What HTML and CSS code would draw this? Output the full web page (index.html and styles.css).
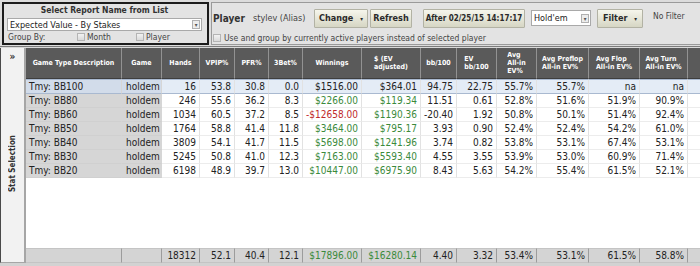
FILE: index.html
```html
<!DOCTYPE html>
<html lang="en">
  <head>
    <meta charset="UTF-8" />
    <title>Expected Value - By Stakes</title>
    <link rel="stylesheet" href="styles.css">
  </head>
  <body>
    <div class="app">
      <div class="toolbar">
        <div class="report-box">
          <div class="report-title">Select Report Name from List</div>
          <div class="select report-select">
            <span class="select-text">Expected Value - By Stakes</span>
            <span class="drop">&#9662;</span>
          </div>
          <div class="group-by">
            <span class="group-label">Group By:</span>
            <label class="check month"><span class="cb"></span>Month</label>
            <label class="check"><span class="cb"></span>Player</label>
          </div>
        </div>
        <div class="player-panel">
          <div class="player-row">
            <span class="player-label">Player</span>
            <span class="player-name">stylev (Alias)</span>
            <button class="btn change">Change <span class="caret">&#9662;</span></button>
            <button class="btn refresh">Refresh</button>
            <button class="btn date">After 02/25/15 14:17:17</button>
            <div class="select game-select">
              <span class="select-text">Hold'em</span>
              <span class="drop">&#9662;</span>
            </div>
            <button class="btn filter">Filter <span class="caret">&#9662;</span></button>
            <span class="no-filter">No Filter</span>
          </div>
          <label class="check active-row"><span class="cb"></span>Use and group by currently active players instead of selected player</label>
        </div>
      </div>

      <div class="main">
        <div class="sidebar">
          <span class="expand">&raquo;</span>
          <span class="vtext">Stat Selection</span>
        </div>
        <div class="grid">
          <table class="stats">
            <colgroup>
              <col class="c-desc"><col class="c-game"><col class="c-hands"><col class="c-vpip">
              <col class="c-pfr"><col class="c-3bet"><col class="c-win"><col class="c-ev">
              <col class="c-bb"><col class="c-evbb"><col class="c-allin"><col class="c-pre">
              <col class="c-flop"><col class="c-turn"><col class="c-more">
            </colgroup>
            <thead>
              <tr>
                <th><span>Game Type Description</span></th>
                <th><span>Game</span></th>
                <th><span>Hands</span></th>
                <th><span>VPIP%</span></th>
                <th><span>PFR%</span></th>
                <th><span>3Bet%</span></th>
                <th><span>Winnings</span></th>
                <th><span>$ (EV<br>adjusted)</span></th>
                <th><span>bb/100</span></th>
                <th><span>EV<br>bb/100</span></th>
                <th><span>Avg<br>All-in<br>EV%</span></th>
                <th><span>Avg Preflop<br>All-in EV%</span></th>
                <th><span>Avg Flop<br>All-in EV%</span></th>
                <th><span>Avg Turn<br>All-in EV%</span></th>
                <th></th>
              </tr>
            </thead>
            <tbody>
              <tr class="selected">
                <td class="txt">Tmy: BB100</td><td class="txt">holdem</td>
                <td>16</td><td>53.8</td><td>30.8</td><td>0.0</td>
                <td>$1516.00</td><td>$364.01</td><td>94.75</td><td>22.75</td>
                <td>55.7%</td><td>55.7%</td><td>na</td><td>na</td><td></td>
              </tr>
              <tr>
                <td class="txt">Tmy: BB80</td><td class="txt">holdem</td>
                <td>246</td><td>55.6</td><td>36.2</td><td>8.3</td>
                <td class="win">$2266.00</td><td class="win">$119.34</td><td>11.51</td><td>0.61</td>
                <td>52.8%</td><td>51.6%</td><td>51.9%</td><td>90.9%</td><td></td>
              </tr>
              <tr>
                <td class="txt">Tmy: BB60</td><td class="txt">holdem</td>
                <td>1034</td><td>60.5</td><td>37.2</td><td>8.5</td>
                <td class="loss">-$12658.00</td><td class="win">$1190.36</td><td>-20.40</td><td>1.92</td>
                <td>50.8%</td><td>50.1%</td><td>51.4%</td><td>92.4%</td><td></td>
              </tr>
              <tr>
                <td class="txt">Tmy: BB50</td><td class="txt">holdem</td>
                <td>1764</td><td>58.8</td><td>41.4</td><td>11.8</td>
                <td class="win">$3464.00</td><td class="win">$795.17</td><td>3.93</td><td>0.90</td>
                <td>52.4%</td><td>52.4%</td><td>54.2%</td><td>61.0%</td><td></td>
              </tr>
              <tr>
                <td class="txt">Tmy: BB40</td><td class="txt">holdem</td>
                <td>3809</td><td>54.1</td><td>41.7</td><td>11.5</td>
                <td class="win">$5698.00</td><td class="win">$1241.96</td><td>3.74</td><td>0.82</td>
                <td>53.8%</td><td>53.1%</td><td>67.4%</td><td>53.1%</td><td></td>
              </tr>
              <tr>
                <td class="txt">Tmy: BB30</td><td class="txt">holdem</td>
                <td>5245</td><td>50.8</td><td>41.0</td><td>12.3</td>
                <td class="win">$7163.00</td><td class="win">$5593.40</td><td>4.55</td><td>3.55</td>
                <td>53.9%</td><td>53.0%</td><td>60.9%</td><td>71.4%</td><td></td>
              </tr>
              <tr>
                <td class="txt">Tmy: BB20</td><td class="txt">holdem</td>
                <td>6198</td><td>48.9</td><td>39.7</td><td>13.0</td>
                <td class="win">$10447.00</td><td class="win">$6975.90</td><td>8.43</td><td>5.63</td>
                <td>54.2%</td><td>55.4%</td><td>61.5%</td><td>52.1%</td><td></td>
              </tr>
            </tbody>
          </table>

          <div class="filler"></div>

          <table class="stats totals">
            <colgroup>
              <col class="c-desc"><col class="c-game"><col class="c-hands"><col class="c-vpip">
              <col class="c-pfr"><col class="c-3bet"><col class="c-win"><col class="c-ev">
              <col class="c-bb"><col class="c-evbb"><col class="c-allin"><col class="c-pre">
              <col class="c-flop"><col class="c-turn"><col class="c-more">
            </colgroup>
            <tr>
              <td></td><td></td>
              <td>18312</td><td>52.1</td><td>40.4</td><td>12.1</td>
              <td class="win">$17896.00</td><td class="win">$16280.14</td><td>4.40</td><td>3.32</td>
              <td>53.4%</td><td>53.1%</td><td>61.5%</td><td>58.8%</td><td></td>
            </tr>
          </table>
        </div>
      </div>
    </div>
  </body>
</html>
```

FILE: styles.css
```css
* {
  margin: 0;
  padding: 0;
  box-sizing: border-box;
}

body {
  background: #d9d9d9;
  font-family: "DejaVu Sans Condensed", "DejaVu Sans", sans-serif;
  color: #222;
}

.app {
  width: 700px;
  height: 266px;
  display: flex;
  flex-direction: column;
  overflow: hidden;
}

/* 顶部工具栏 */
.toolbar {
  height: 47px;
  display: flex;
  gap: 2px;
  padding: 2px 0 1px 2px;
  border-bottom: 1px solid #7c7c7c;
  background: #dcdcdc;
  white-space: nowrap;
}

.report-box {
  width: 207px;
  flex-shrink: 0;
  border: 2px solid #1c1c1c;
  background: #e3e3e3;
  padding: 0 5px 0 3px;
}

.report-title {
  font-weight: bold;
  font-size: 8.5px;
  text-align: center;
  height: 12px;
  line-height: 13px;
  color: #333;
}

.select {
  display: flex;
  align-items: center;
  background: #fff;
  border: 1px solid #a9a9a9;
  font-size: 9px;
  color: #222;
}

.select-text {
  flex: 1;
  padding-left: 2px;
}

.drop {
  width: 8px;
  height: 9px;
  margin-right: 1px;
  border: 1px solid #b0b0b0;
  background: #ececec;
  color: #555;
  font-size: 6px;
  line-height: 7px;
  text-align: center;
}

.report-select {
  height: 13px;
  margin-top: 2px;
}

.group-by {
  display: flex;
  align-items: center;
  height: 12px;
  font-size: 8.5px;
  color: #444;
}

.group-label {
  width: 70px;
  padding-left: 1px;
}

.check {
  display: flex;
  align-items: center;
  gap: 2px;
}

.month {
  width: 59px;
}

.cb {
  flex-shrink: 0;
  width: 8px;
  height: 8px;
  border: 1px solid #b4b4b4;
  background: linear-gradient(#f2f2f2, #dadada);
}

.player-panel {
  flex: 1;
  border: 1px solid #9a9a9a;
  border-right: none;
  background: #e3e3e3;
  padding: 1px 0 0 1px;
}

.player-row {
  display: flex;
  align-items: center;
  height: 26px;
  padding-top: 2px;
}

.player-label {
  font-weight: bold;
  font-size: 10px;
  color: #333;
  width: 40px;
}

.player-name {
  font-size: 9px;
  color: #444;
  width: 61px;
}

.btn {
  flex-shrink: 0;
  height: 19px;
  border: 1px solid #b2b2a4;
  border-radius: 1px;
  background: linear-gradient(#f6f6ec, #d6d6c4);
  font-family: inherit;
  font-weight: bold;
  font-size: 9px;
  color: #2a2a2a;
  white-space: nowrap;
}

.caret {
  font-size: 6px;
  margin-left: 4px;
}

.change {
  width: 54px;
  margin-right: 2px;
}

.refresh {
  width: 42px;
  margin-right: 11px;
}

.date {
  width: 102px;
  margin-right: 6px;
  font-size: 8px;
}

.game-select {
  flex-shrink: 0;
  width: 60px;
  height: 16px;
  margin-right: 6px;
}

.filter {
  width: 46px;
}

.no-filter {
  font-size: 8.5px;
  color: #444;
  margin-left: 10px;
  margin-top: -4px;
}

.active-row {
  height: 15px;
  font-size: 8.5px;
  color: #444;
  gap: 3px;
}

/* 主体区域 */
.main {
  flex: 1;
  display: flex;
  min-height: 0;
  padding-top: 1px;
  border-bottom: 3px solid #d2d2d2;
}

.sidebar {
  width: 26px;
  flex-shrink: 0;
  border-left: 1px solid #4a4a4a;
  border-right: 2px solid #a6a6a6;
  border-bottom: 1px solid #a6a6a6;
  background: #f2f2f2;
  display: flex;
  flex-direction: column;
  align-items: center;
}

.expand {
  font-size: 10px;
  font-weight: bold;
  color: #333;
  margin-top: 3px;
}

.vtext {
  writing-mode: vertical-rl;
  transform: rotate(180deg);
  font-weight: bold;
  font-size: 8px;
  color: #333;
  margin-top: 73px;
}

.grid {
  flex: 1;
  display: flex;
  flex-direction: column;
  background: #fff;
  overflow: hidden;
}

.filler {
  flex: 1;
}

.stats {
  table-layout: fixed;
  border-collapse: separate;
  border-spacing: 0;
  width: 692px;
  font-size: 10px;
}

.c-desc { width: 96px; }
.c-game { width: 40px; }
.c-hands { width: 38px; }
.c-vpip { width: 35px; }
.c-pfr { width: 34px; }
.c-3bet { width: 34px; }
.c-win { width: 59px; }
.c-ev { width: 59px; }
.c-bb { width: 36px; }
.c-evbb { width: 40px; }
.c-allin { width: 40px; }
.c-pre { width: 52px; }
.c-flop { width: 51px; }
.c-turn { width: 48px; }
.c-more { width: 30px; }

th {
  height: 31px;
  padding: 0 2px;
  background: #5a5a5a;
  border-right: 1px solid #929292;
  border-bottom: 1px solid #3e3e3e;
  color: #fff;
  font-weight: bold;
  font-size: 7px;
  line-height: 8px;
  text-align: center;
  vertical-align: middle;
}

th span {
  display: inline-block;
  text-align: left;
}

td {
  height: 14px;
  padding: 0 3px;
  line-height: 13px;
  border-right: 1px solid #e2e2e2;
  border-bottom: 1px solid #ececec;
  text-align: right;
  white-space: nowrap;
  overflow: hidden;
}

td.txt {
  text-align: left;
  background: #d6d6d6;
  border-right-color: #d6d6d6;
  border-bottom-color: #d0d0d0;
  padding-left: 3px;
}

td.txt + td.txt {
  padding-left: 4px;
}

.selected td {
  background: #e4ecf6;
  border-bottom-color: #a9b9d0;
  border-top: 1px solid #a9b9d0;
}

.selected td.txt {
  background: #d2dcea;
}

.win {
  color: #3b8a3b;
}

.loss {
  color: #c02a2a;
}

.totals td {
  background: #d4d4d4;
  border-top: 1px solid #c4c4c4;
  border-right: 1px solid #9c9c9c;
  border-bottom: 1px solid #c4c4c4;
  height: 15px;
}
```
